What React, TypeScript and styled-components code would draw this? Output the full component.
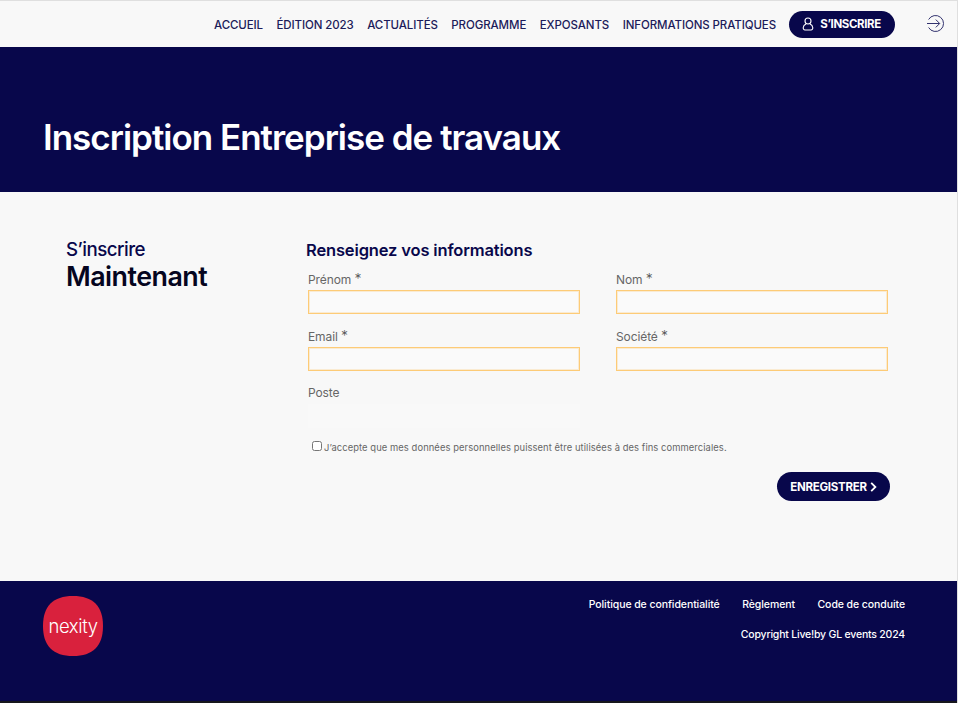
import React from 'react'
import styled, { createGlobalStyle } from 'styled-components'

const navy = '#08074b'

const navItems = ['ACCUEIL', 'ÉDITION 2023', 'ACTUALITÉS', 'PROGRAMME', 'EXPOSANTS', 'INFORMATIONS PRATIQUES']

const App = () => {
    return (
        <>
        <GlobalStyle />
        <Page>
            <Header>
                <Nav>
                    {navItems.map((item) => (
                        <NavLink key={item}>{item}</NavLink>
                    ))}
                </Nav>
                <SignUp>
                    <svg width="14" height="14" viewBox="0 0 14 14" fill="none" stroke="white" strokeWidth="1.1">
                        <circle cx="7" cy="4" r="3" />
                        <path d="M5 7 C1.5 8.5 1.5 13 4 13 H10 C12.5 13 12.5 8.5 9 7" />
                    </svg>
                    S’INSCRIRE
                </SignUp>
                <LoginIcon width="19" height="19" viewBox="0 0 19 19" fill="none" stroke="#33336f" strokeWidth="1">
                    <path d="M2.6 5.5 A8 8 0 1 1 2.6 13.5" />
                    <path d="M1 9.5 H13.5 M9.8 5.6 L13.7 9.5 L9.8 13.4" />
                </LoginIcon>
            </Header>
            <Hero>
                <HeroTitle>Inscription Entreprise de travaux</HeroTitle>
            </Hero>
            <Main>
                <Side>
                    <SideSmall>S’inscrire</SideSmall>
                    <SideBig>Maintenant</SideBig>
                </Side>
                <FormArea>
                    <FormTitle>Renseignez vos informations</FormTitle>
                    <Fields>
                        <Field>
                            <Label>Prénom <Star>*</Star></Label>
                            <Input />
                        </Field>
                        <Field>
                            <Label>Nom <Star>*</Star></Label>
                            <Input />
                        </Field>
                        <Field>
                            <Label>Email <Star>*</Star></Label>
                            <Input />
                        </Field>
                        <Field>
                            <Label>Société <Star>*</Star></Label>
                            <Input />
                        </Field>
                        <Field>
                            <Label>Poste</Label>
                            <Input $plain />
                        </Field>
                    </Fields>
                    <Consent>
                        <Check type="checkbox" />
                        <span>J’accepte que mes données personnelles puissent être utilisées à des fins commerciales.</span>
                    </Consent>
                    <Actions>
                        <Save>
                            ENREGISTRER
                            <svg width="7" height="10" viewBox="0 0 7 10" fill="none" stroke="white" strokeWidth="1.8">
                                <path d="M1.2 .8 L5.4 5 L1.2 9.2" />
                            </svg>
                        </Save>
                    </Actions>
                </FormArea>
            </Main>
            <Footer>
                <Logo>
                    <LogoShape viewBox="0 0 60 60">
                        <path d="M30 0 C50 0 60 10 60 30 C60 50 50 60 30 60 C10 60 0 50 0 30 C0 10 10 0 30 0 Z" fill="#d9213d" />
                    </LogoShape>
                    <LogoText>nexity</LogoText>
                </Logo>
                <FooterRight>
                    <FooterLinks>
                        <FooterLink>Politique de confidentialité</FooterLink>
                        <FooterLink>Règlement</FooterLink>
                        <FooterLink>Code de conduite</FooterLink>
                    </FooterLinks>
                    <Copyright>Copyright Live!by GL events 2024</Copyright>
                </FooterRight>
            </Footer>
        </Page>
        </>
    )
}

export default App

const GlobalStyle = createGlobalStyle`
    html, body {
        margin: 0;
        padding: 0;
        background: #dfdfdf;
    }
    * {
        box-sizing: border-box;
    }
    body {
        font-family: Inter, "Liberation Sans", sans-serif;
    }
`

const Page = styled.div`
    width: 957px;
    height: 702px;
    margin-top: 1px;
    display: flex;
    flex-direction: column;
    background: #f8f8f8;
    border-bottom: 2px solid #16161c;
`

const Header = styled.header`
    height: 46px;
    display: flex;
    align-items: center;
    justify-content: flex-end;
    padding: 0 12px 0 0;
`

const Nav = styled.nav`
    display: flex;
    gap: 13.5px;
    margin: 1px 13px 0 0;
`

const NavLink = styled.a`
    font-size: 11.5px;
    font-weight: 500;
    letter-spacing: -0.1px;
    color: #1c1b5a;
    white-space: nowrap;
`

const SignUp = styled.button`
    width: 106px;
    height: 27px;
    border: none;
    border-radius: 14px;
    padding: 0 2px 0 0;
    background: ${navy};
    color: white;
    display: flex;
    align-items: center;
    justify-content: center;
    gap: 5px;
    font-family: inherit;
    font-size: 11.5px;
    font-weight: 700;
    letter-spacing: -0.4px;
    margin-right: 31px;
`

const LoginIcon = styled.svg`
    flex: none;
    margin-bottom: 2px;
`

const Hero = styled.section`
    height: 145px;
    background: ${navy};
    display: flex;
    align-items: center;
    padding: 35px 0 0 43px;
`

const HeroTitle = styled.h1`
    margin: 0;
    font-size: 35px;
    font-weight: 600;
    letter-spacing: -1px;
    color: white;
`

const Main = styled.main`
    height: 389px;
    display: flex;
    padding: 47px 0 0 66px;
`

const Side = styled.div`
    width: 240px;
    flex: none;
    padding-top: 1px;
`

const SideSmall = styled.div`
    font-size: 18.7px;
    font-weight: 500;
    line-height: 20px;
    letter-spacing: -0.5px;
    color: ${navy};
`

const SideBig = styled.div`
    font-size: 26.8px;
    font-weight: 600;
    line-height: 32px;
    letter-spacing: -0.5px;
    color: #050520;
`

const FormArea = styled.div`
    width: 584px;
`

const FormTitle = styled.h2`
    margin: 0 0 9px;
    font-size: 16.5px;
    font-weight: 600;
    line-height: 22px;
    letter-spacing: -0.15px;
    color: ${navy};
`

const Fields = styled.div`
    display: grid;
    grid-template-columns: 272px 272px;
    column-gap: 36px;
    row-gap: 13px;
    padding-left: 2px;
`

const Field = styled.div`
    display: flex;
    flex-direction: column;
`

const Label = styled.label`
    height: 20px;
    font-size: 12px;
    line-height: 18px;
    letter-spacing: -0.1px;
    color: #666666;
`

const Star = styled.span`
    font-size: 14px;
    font-weight: 300;
    color: #555555;
`

const Input = styled.input<{ $plain?: boolean }>`
    height: 24px;
    width: 100%;
    border: 1px solid ${(p) => (p.$plain ? '#f9f9f9' : '#fdcb77')};
    background: ${(p) => (p.$plain ? '#f9f9f9' : '#fafafa')};
    box-shadow: ${(p) => (p.$plain ? 'none' : 'inset 0 0 0 1px rgba(253, 203, 119, 0.3)')};
    outline: none;
    padding: 0 6px;
`

const Consent = styled.div`
    display: flex;
    align-items: flex-start;
    margin: 13px 0 0 6px;
    font-size: 9.4px;
    line-height: 13px;
    letter-spacing: 0.08px;
    color: #666666;
`

const Check = styled.input`
    width: 10px;
    height: 10px;
    margin: 0 2px 0 0;
    flex: none;
`

const Actions = styled.div`
    display: flex;
    justify-content: flex-end;
    margin-top: 18px;
`

const Save = styled.button`
    width: 113px;
    height: 29px;
    border: none;
    border-radius: 15px;
    padding: 0;
    background: ${navy};
    color: white;
    display: flex;
    align-items: center;
    justify-content: center;
    gap: 3px;
    font-family: inherit;
    font-size: 11.5px;
    font-weight: 700;
    letter-spacing: -0.25px;
`

const Footer = styled.footer`
    flex: 1;
    background: ${navy};
    display: flex;
    justify-content: space-between;
    padding: 15px 52px 0 43px;
`

const Logo = styled.div`
    position: relative;
    width: 60px;
    height: 60px;
    display: flex;
    align-items: center;
    justify-content: center;
`

const LogoShape = styled.svg`
    position: absolute;
    inset: 0;
    width: 60px;
    height: 60px;
`

const LogoText = styled.span`
    position: relative;
    font-size: 18.5px;
    font-weight: 300;
    letter-spacing: -0.4px;
    color: #fff;
`

const FooterRight = styled.div`
    display: flex;
    flex-direction: column;
    align-items: flex-end;
    padding-top: 2px;
`

const FooterLinks = styled.div`
    display: flex;
    gap: 22.5px;
`

const FooterLink = styled.a`
    font-size: 10.5px;
    line-height: 14px;
    font-weight: 500;
    letter-spacing: -0.08px;
    color: #fff;
`

const Copyright = styled.div`
    margin-top: 16px;
    font-size: 10.5px;
    line-height: 14px;
    font-weight: 500;
    letter-spacing: -0.2px;
    color: #fff;
`
